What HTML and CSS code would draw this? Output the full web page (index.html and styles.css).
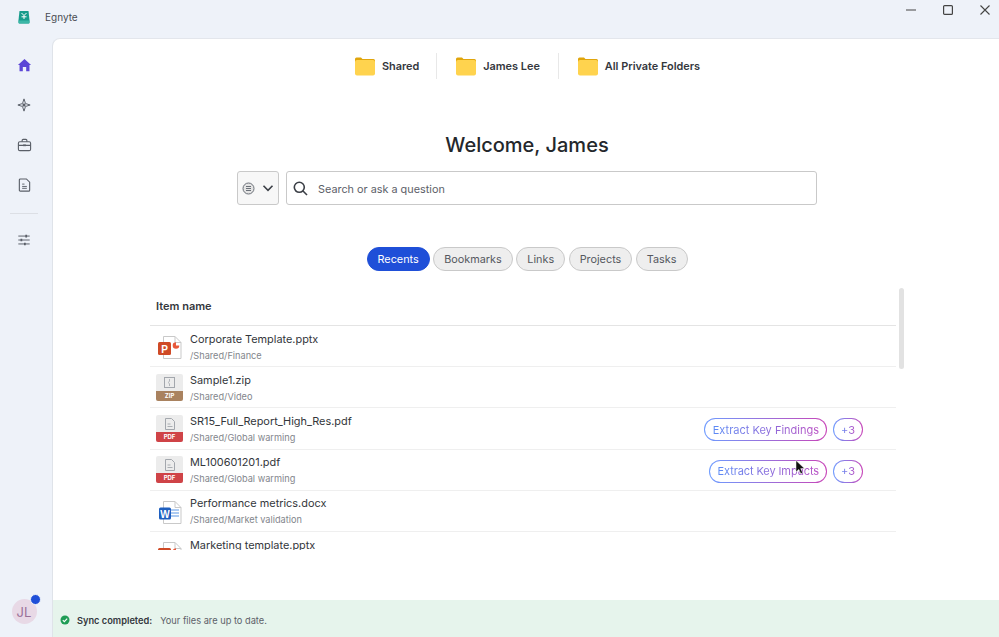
FILE: index.html
```html
<!DOCTYPE html>
<html lang="en">
<head>
  <meta charset="UTF-8" />
  <title>Egnyte</title>
  <link rel="stylesheet" href="styles.css">
</head>
<body>
  <svg class="sprites" width="0" height="0">
    <defs>
      <symbol id="folder" viewBox="0 0 20 19">
        <path d="M0 2a1.500 1.500 0 0 1 1.500-1.500h4.500l1.500 1.500H18.500a1.500 1.500 0 0 1 1.500 1.500v3H0z" fill="#e0a50c"/>
        <rect y="3" width="20" height="15.500" rx="2" fill="#ffd34e"/>
      </symbol>
      <symbol id="pptx" viewBox="0 0 26 26">
        <path d="M6.500 3.500h11.500l6 6v16h-17.500z" fill="#fff" stroke="#c9c9c9"/>
        <path d="M18 3.500v6h6" fill="none" stroke="#c9c9c9"/>
        <path d="M19 12.500h3.300a3.300 3.300 0 1 1-3.300-3.300z" fill="#e8583a"/>
        <rect x="1" y="9" width="13" height="13" rx="1.500" fill="#cf4a26"/>
        <text x="7.500" y="19.500" class="doc-letter">P</text>
      </symbol>
      <symbol id="docx" viewBox="0 0 26 26">
        <path d="M6.500 3.500h11.500l6 6v16h-17.500z" fill="#fff" stroke="#c9c9c9"/>
        <path d="M18 3.500v6h6" fill="none" stroke="#c9c9c9"/>
        <path d="M14 12h8M14 15h8M14 18h8" stroke="#5d97e6" stroke-width="1.100"/>
        <rect x="2" y="9.500" width="12" height="12" rx="1.500" fill="#1f5fbf"/>
        <text x="8" y="19.500" class="doc-letter">W</text>
      </symbol>
    </defs>
  </svg>

  <header class="titlebar">
    <div class="brand">
      <svg class="logo" width="14" height="14" viewBox="0 0 14 14">
        <path d="M2.500 1h9l1 9v2.500a1 1 0 0 1-1 1h-9a1 1 0 0 1-1-1V10z" fill="#179c8c"/>
        <path d="M1.500 10.500h11v2a1 1 0 0 1-1 1h-9a1 1 0 0 1-1-1z" fill="#3cb7a7"/>
        <path d="M4.500 3l2.500 2.500L9.500 3M7 5.500V9M4.500 6.800h5" fill="none" stroke="#fff" stroke-width="1"/>
      </svg>
      <span>Egnyte</span>
    </div>
    <div class="window-btns">
      <svg width="10" height="10" viewBox="0 0 10 10"><path d="M0 5h10" stroke="#444" stroke-width="1"/></svg>
      <svg width="10" height="10" viewBox="0 0 10 10"><rect x="0.600" y="0.600" width="8.800" height="8.800" rx="1" fill="none" stroke="#444" stroke-width="1.200"/></svg>
      <svg width="10" height="10" viewBox="0 0 10 10"><path d="M0.500 0.500l9 9M9.500 0.500l-9 9" stroke="#444" stroke-width="1.100"/></svg>
    </div>
  </header>

  <div class="app">
    <nav class="sidebar">
      <a class="nav-item">
        <svg width="15" height="15" viewBox="0 0 16 16"><path d="M8 1l7 6.500h-1.700V14H9.800V9.700H6.200V14H2.700V7.500H1z" fill="#5b45d6"/></svg>
      </a>
      <a class="nav-item">
        <svg width="14" height="14" viewBox="0 0 16 16" fill="none" stroke="#5a5f68" stroke-width="1.100"><path d="M8 1l1.700 5.300L15 8l-5.300 1.700L8 15l-1.700-5.300L1 8l5.300-1.700z"/><path d="M8 5.800L10.200 8 8 10.200 5.800 8z" fill="#5a5f68" stroke="none"/></svg>
      </a>
      <a class="nav-item">
        <svg width="15" height="15" viewBox="0 0 16 16" fill="none" stroke="#5a5f68" stroke-width="1.200"><rect x="1.500" y="4" width="13" height="9.500" rx="1.500"/><path d="M5.500 4V2.500a1 1 0 0 1 1-1h3a1 1 0 0 1 1 1V4M1.500 7.800h13"/><path d="M6.500 7.800h3" stroke-width="1.800"/></svg>
      </a>
      <a class="nav-item">
        <svg width="15" height="15" viewBox="0 0 16 16" fill="none" stroke="#5a5f68" stroke-width="1.200"><path d="M2.500 2a1 1 0 0 1 1-1H10l3.500 3.500V13a1 1 0 0 1-1 1h-9a1 1 0 0 1-1-1z"/><path d="M5.500 6.500H8M5.500 9h5M5.500 11h5" stroke-width="1"/></svg>
      </a>
      <div class="nav-sep"></div>
      <a class="nav-item">
        <svg width="14" height="14" viewBox="0 0 16 16" fill="none" stroke="#5a5f68" stroke-width="1.100"><path d="M1.500 3.500h13M1.500 8h13M1.500 12.500h13"/><path d="M10.500 2v3M5 6.500v3M9 11v3" stroke-width="2"/></svg>
      </a>
      <div class="avatar">JL<span class="avatar-dot"></span></div>
    </nav>

    <main class="main">
      <div class="content">
        <div class="quick-folders">
          <a class="quick-folder"><svg width="20" height="19"><use href="#folder"/></svg>Shared</a>
          <a class="quick-folder"><svg width="20" height="19"><use href="#folder"/></svg>James Lee</a>
          <a class="quick-folder"><svg width="20" height="19"><use href="#folder"/></svg>All Private Folders</a>
        </div>

        <h1>Welcome, James</h1>

        <div class="search-row">
          <button class="scope-btn">
            <svg width="13" height="13" viewBox="0 0 13 13" fill="none" stroke="#6b7078"><circle cx="6.500" cy="6.500" r="5.500" fill="#e4e4e4"/><path d="M4 4.500h5M4 6.500h5M4 8.500h5" stroke-width="1"/></svg>
            <svg width="12" height="12" viewBox="0 0 12 12" fill="none" stroke="#3b3f46" stroke-width="1.600"><path d="M1.500 3.800L6 8.300l4.500-4.500"/></svg>
          </button>
          <div class="search-box">
            <svg width="15" height="15" viewBox="0 0 15 15" fill="none" stroke="#3b3f46" stroke-width="1.600"><circle cx="6.300" cy="6.300" r="5"/><path d="M10 10l4 4"/></svg>
            <span>Search or ask a question</span>
          </div>
        </div>

        <div class="tabs">
          <a class="tab active">Recents</a>
          <a class="tab">Bookmarks</a>
          <a class="tab">Links</a>
          <a class="tab">Projects</a>
          <a class="tab">Tasks</a>
        </div>

        <div class="table-wrap">
          <div class="list">
            <div class="list-head">Item name</div>

            <div class="row">
              <svg class="file-icon" width="26" height="26"><use href="#pptx"/></svg>
              <div class="file-info">
                <div class="file-name">Corporate Template.pptx</div>
                <div class="file-path">/Shared/Finance</div>
              </div>
            </div>

            <div class="row">
              <div class="type-icon zip"><svg width="11" height="11" viewBox="0 0 11 11" fill="none" stroke="#a3a7ad"><rect x="0.500" y="0.500" width="10" height="10"/><path d="M5.500 2v2L4.500 5.500l1 1.500v2" stroke-width="0.800"/></svg><b>ZIP</b></div>
              <div class="file-info">
                <div class="file-name">Sample1.zip</div>
                <div class="file-path">/Shared/Video</div>
              </div>
            </div>

            <div class="row">
              <div class="type-icon pdf"><svg width="10" height="12" viewBox="0 0 10 12" fill="none" stroke="#a3a7ad"><path d="M0.500 0.500H6.500L9.500 3.500v8h-9z"/><path d="M2.500 6h3M2.500 8.500h5" stroke-width="0.900"/></svg><b>PDF</b></div>
              <div class="file-info">
                <div class="file-name">SR15_Full_Report_High_Res.pdf</div>
                <div class="file-path">/Shared/Global warming</div>
              </div>
              <div class="ai-actions">
                <a class="ai-pill"><span>Extract Key Findings</span></a>
                <a class="ai-pill more"><span>+3</span></a>
              </div>
            </div>

            <div class="row">
              <div class="type-icon pdf"><svg width="10" height="12" viewBox="0 0 10 12" fill="none" stroke="#a3a7ad"><path d="M0.500 0.500H6.500L9.500 3.500v8h-9z"/><path d="M2.500 6h3M2.500 8.500h5" stroke-width="0.900"/></svg><b>PDF</b></div>
              <div class="file-info">
                <div class="file-name">ML100601201.pdf</div>
                <div class="file-path">/Shared/Global warming</div>
              </div>
              <div class="ai-actions">
                <a class="ai-pill tight"><span>Extract Key Impacts</span></a>
                <a class="ai-pill more"><span>+3</span></a>
              </div>
            </div>

            <div class="row">
              <svg class="file-icon" width="26" height="26"><use href="#docx"/></svg>
              <div class="file-info">
                <div class="file-name">Performance metrics.docx</div>
                <div class="file-path">/Shared/Market validation</div>
              </div>
            </div>

            <div class="row">
              <svg class="file-icon" width="26" height="26"><use href="#pptx"/></svg>
              <div class="file-info">
                <div class="file-name">Marketing template.pptx</div>
                <div class="file-path">/Shared/Marketing</div>
              </div>
            </div>
          </div>
          <div class="scroll-thumb"></div>
        </div>
      </div>

      <footer class="sync-bar">
        <svg width="10" height="10" viewBox="0 0 10 10"><circle cx="5" cy="5" r="4.500" fill="#1f9d55"/><path d="M2.800 5.200l1.500 1.500 2.900-3.100" fill="none" stroke="#fff" stroke-width="1.100"/></svg>
        <strong>Sync completed:</strong>
        <span>Your files are up to date.</span>
      </footer>
    </main>
  </div>

  <svg class="cursor" width="11" height="15" viewBox="0 0 11 15"><path d="M1 0.500v11.500l2.800-2.600 2 4.300 1.900-.9-2-4.200h3.800z" fill="#111" stroke="#fff" stroke-width="0.500"/></svg>
</body>
</html>
```

FILE: styles.css
```css
* {
  box-sizing: border-box;
}

html, body {
  height: 100%;
}

body {
  margin: 0;
  font-family: 'Inter', 'Noto Sans', sans-serif;
  color: #2b2e33;
  background: #eef2f9;
  overflow: hidden;
  display: flex;
  flex-direction: column;
}

.sprites {
  position: absolute;
}

.doc-letter {
  font-family: 'Liberation Sans', sans-serif;
  font-size: 10px;
  font-weight: 700;
  fill: #fff;
  text-anchor: middle;
}

.titlebar {
  height: 38px;
  flex-shrink: 0;
  display: flex;
  justify-content: space-between;
  padding-left: 17px;
}

.brand {
  display: flex;
  align-items: center;
  gap: 14px;
  height: 34px;
  font-size: 10px;
  color: #4a4d53;
}

.window-btns {
  display: flex;
  gap: 27px;
  padding: 5px 9px 0 0;
}

.app {
  flex: 1;
  display: flex;
  min-height: 0;
}

.sidebar {
  width: 52px;
  flex-shrink: 0;
  display: flex;
  flex-direction: column;
  align-items: center;
  padding: 7px 4px 13px 0;
}

.nav-item {
  width: 40px;
  height: 40px;
  display: flex;
  align-items: center;
  justify-content: center;
}

.nav-sep {
  width: 28px;
  height: 1px;
  background: #dcdfe5;
  margin: 8px 0 6px;
}

.avatar {
  position: relative;
  margin-top: auto;
  width: 25px;
  height: 25px;
  border-radius: 50%;
  background: #e8d9e6;
  color: #9a7098;
  font-size: 13px;
  display: flex;
  align-items: center;
  justify-content: center;
}

.avatar-dot {
  position: absolute;
  top: -5px;
  right: -4px;
  width: 11px;
  height: 11px;
  border-radius: 50%;
  background: #1f4fd8;
  border: 1px solid #eef2f9;
}

.main {
  flex: 1;
  min-width: 0;
  background: #fff;
  border-top: 1px solid #e3e6ec;
  border-left: 1px solid #dfe3e9;
  border-top-left-radius: 8px;
  display: flex;
  flex-direction: column;
}

.content {
  flex: 1;
  min-height: 0;
  padding: 14px 95px 0 97px;
  display: flex;
  flex-direction: column;
  align-items: center;
}

.quick-folders {
  display: flex;
  height: 26px;
}

.quick-folder {
  display: flex;
  align-items: center;
  gap: 7px;
  padding: 0 18px 0 19px;
  font-size: 10.900px;
  font-weight: 600;
  color: #34373d;
  border-left: 1px solid #e8e8e8;
}

.quick-folder:first-child {
  border-left: none;
  padding-right: 17px;
}

h1 {
  margin: 53px 0 0;
  font-size: 20px;
  line-height: 26px;
  font-weight: 500;
  color: #24272b;
}

.search-row {
  display: flex;
  gap: 7px;
  margin-top: 13px;
  width: 580px;
}

.scope-btn {
  width: 42px;
  height: 34px;
  border: 1px solid #c9c9c9;
  border-radius: 3px;
  background: #f7f7f7;
  display: flex;
  align-items: center;
  justify-content: center;
  gap: 7px;
  padding: 0;
}

.search-box {
  flex: 1;
  height: 34px;
  border: 1px solid #c9c9c9;
  border-radius: 3px;
  display: flex;
  align-items: center;
  gap: 10px;
  padding-left: 6px;
  font-size: 10.850px;
  color: #5c6068;
}

.search-box span {
  padding-top: 2px;
}

.tabs {
  display: flex;
  gap: 3.500px;
  margin-top: 42px;
}

.tab {
  height: 24px;
  padding: 0 10px;
  border: 1px solid #c9c9c9;
  border-radius: 12px;
  background: #eeeeee;
  color: #55585e;
  font-size: 10.850px;
  display: flex;
  align-items: center;
}

.tab.active {
  background: #1f4fd8;
  border-color: #1f4fd8;
  color: #fff;
}

.table-wrap {
  position: relative;
  width: 100%;
  height: 262px;
  margin-top: 17px;
  overflow: hidden;
}

.list {
  width: 746px;
}

.list-head {
  height: 38px;
  padding: 0 6px 2px;
  display: flex;
  align-items: center;
  font-size: 11px;
  font-weight: 600;
  color: #34373d;
  border-bottom: 1px solid #e4e4e4;
}

.row {
  height: 41.200px;
  padding: 0 33px 0 6px;
  display: flex;
  align-items: center;
  gap: 7px;
  border-bottom: 1px solid #efefef;
}

.file-icon {
  flex-shrink: 0;
  margin-left: 1px;
}

.type-icon {
  width: 27px;
  height: 27px;
  flex-shrink: 0;
  border-radius: 2px;
  background: #ececec;
  display: flex;
  flex-direction: column;
  align-items: center;
  justify-content: space-between;
  padding-top: 3px;
  overflow: hidden;
}

.type-icon b {
  width: 100%;
  height: 10px;
  font-size: 6px;
  line-height: 10px;
  text-align: center;
  color: #fff;
}

.type-icon.zip b {
  background: #a9825f;
}

.type-icon.pdf b {
  background: #cf4347;
}

.file-info {
  flex: 1;
  min-width: 0;
}

.file-name {
  font-size: 10.900px;
  line-height: 16px;
  color: #33363b;
}

.file-path {
  margin-top: 2px;
  font-size: 9.200px;
  line-height: 13px;
  color: #83868c;
}

.ai-actions {
  display: flex;
  gap: 6px;
  margin-top: 3px;
}

.ai-pill {
  height: 23px;
  padding: 0 7px 0 8px;
  border: 1px solid transparent;
  border-radius: 12px;
  background: linear-gradient(#fff, #fff) padding-box, linear-gradient(90deg, #6d9bff, #c845b8) border-box;
  font-size: 11px;
  display: flex;
  align-items: center;
}

.ai-pill.tight {
  letter-spacing: -0.100px;
}

.ai-pill span {
  background: linear-gradient(90deg, #5c8bf5, #b84fc4);
  -webkit-background-clip: text;
  background-clip: text;
  color: transparent;
}

.ai-pill.more {
  width: 30px;
  padding: 0;
  justify-content: center;
}

.scroll-thumb {
  position: absolute;
  top: 0;
  left: 749px;
  width: 5px;
  height: 81px;
  border-radius: 3px;
  background: #e2e2e2;
}

.sync-bar {
  height: 37px;
  flex-shrink: 0;
  background: #e6f4ec;
  display: flex;
  align-items: center;
  padding: 3px 0 0 7px;
  font-size: 9.250px;
  color: #5c6068;
}

.sync-bar strong {
  font-weight: 600;
  color: #34373d;
  margin-left: 7px;
  margin-right: 8px;
}

.cursor {
  position: absolute;
  left: 795px;
  top: 460px;
}
```
